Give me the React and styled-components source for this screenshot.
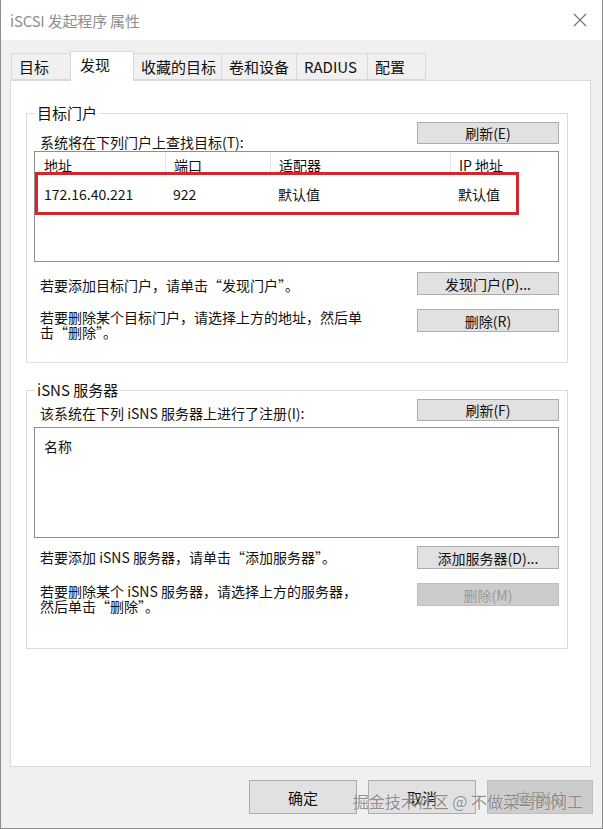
import React from 'react';
import styled, { createGlobalStyle } from 'styled-components';

const GlobalStyle = createGlobalStyle`
  body {
    margin: 0;
    background: #ffffff;
    font-family: "Noto Sans CJK SC", "Noto Sans", sans-serif;
    color: #111;
  }
`;

const Window = styled.div`
  position: relative;
  width: 603px;
  height: 829px;
  box-sizing: border-box;
  background: #f0f0f0;
  border: 1px solid #8c8c8c;
  border-top: none;
  display: flex;
  flex-direction: column;
`;

const TitleBar = styled.div`
  height: 40px;
  flex: none;
  background: #ffffff;
  display: flex;
  align-items: center;
  justify-content: space-between;
  padding: 0 15px 0 9px;
`;

const Title = styled.div`
  font-size: 15px;
  color: #8e8e8e;
  letter-spacing: -0.2px;
`;

const Body = styled.div`
  padding: 11px 9px 0 9px;
  display: flex;
  flex-direction: column;
`;

const TabStrip = styled.div`
  display: flex;
  align-items: flex-end;
  height: 29px;
  padding-left: 1px;
  position: relative;
  z-index: 1;
`;

const Tab = styled.div`
  box-sizing: border-box;
  width: ${p => p.$w}px;
  height: ${p => (p.$active ? 30 : 27)}px;
  margin-bottom: ${p => (p.$active ? -1 : 0)}px;
  padding-left: ${p => (p.$active ? 9 : 7)}px;
  background: ${p => (p.$active ? '#ffffff' : '#f0f0f0')};
  border: 1px solid #d9d9d9;
  border-bottom: ${p => (p.$active ? 'none' : '1px solid #d9d9d9')};
  margin-right: -1px;
  font-size: 15px;
  line-height: ${p => (p.$active ? 26 : 25)}px;
  white-space: nowrap;
`;

const Panel = styled.div`
  box-sizing: border-box;
  height: 687px;
  margin-right: 2px;
  background: #ffffff;
  border: 1px solid #d9d9d9;
  padding: 23px 22px 0 15px;
`;

const Group = styled.fieldset`
  margin: ${p => p.$top || 0}px 0 0 0;
  border: 1px solid #dcdcdc;
  padding: 0 8px ${p => p.$bottom}px 7px;
  min-inline-size: 0;
`;

const Legend = styled.legend`
  margin-left: 1px;
  padding: 0 2px;
  font-size: 15px;
  line-height: 18px;
`;

const Row = styled.div`
  display: flex;
  justify-content: space-between;
  align-items: flex-start;
  margin-top: ${p => p.$gap || 0}px;
  height: ${p => (p.$h ? `${p.$h}px` : 'auto')};
`;

const Label = styled.div`
  margin-left: 6px;
  margin-top: ${p => p.$top || 0}px;
  max-width: 330px;
  font-size: 14px;
  line-height: ${p => p.$lh || 16}px;
`;

const Button = styled.div`
  box-sizing: border-box;
  width: 142px;
  height: ${p => p.$h || 23}px;
  flex: none;
  display: flex;
  align-items: center;
  justify-content: center;
  background: ${p => (p.$disabled ? '#cccccc' : '#e1e1e1')};
  border: 1px solid ${p => (p.$disabled ? '#bfbfbf' : '#adadad')};
  color: ${p => (p.$disabled ? '#9a9a9a' : '#111')};
  font-size: 14px;
`;

const ListBox = styled.div`
  position: relative;
  box-sizing: border-box;
  height: 111px;
  border: 1px solid #8f8f8f;
  background: #ffffff;
  overflow: hidden;
`;

const Columns = styled.div`
  display: grid;
  grid-template-columns: 130px 105px 180px 1fr;
  height: ${p => p.$h}px;
  align-items: center;
  font-size: 14px;
`;

const Cell = styled.div`
  height: 100%;
  display: flex;
  align-items: center;
  padding-left: ${p => (p.$first ? 9 : 8)}px;
  border-left: ${p => (p.$sep ? '1px solid #e5e5e5' : 'none')};
  white-space: nowrap;
`;

const NameHeader = styled.div`
  padding: 8px 0 0 9px;
  font-size: 14px;
  line-height: 20px;
`;

// red marker frame drawn over the first portal row
const Highlight = styled.div`
  position: absolute;
  left: 0;
  top: 20px;
  width: 484px;
  height: 43px;
  box-sizing: border-box;
  border: 3px solid #d9242c;
`;

const Footer = styled.div`
  display: flex;
  justify-content: flex-end;
  gap: 11px;
  margin-top: 13px;
`;

const FooterButton = styled.div`
  box-sizing: border-box;
  width: ${p => p.$w}px;
  height: 34px;
  display: flex;
  align-items: center;
  justify-content: center;
  background: ${p => (p.$disabled ? '#cccccc' : '#e1e1e1')};
  border: 1px solid ${p => (p.$disabled ? '#bfbfbf' : '#adadad')};
  color: ${p => (p.$disabled ? '#9a9a9a' : '#111')};
  font-size: 15px;
`;

const Watermark = styled.div`
  position: absolute;
  right: 19px;
  top: 790px;
  font-size: 16px;
  line-height: 22px;
  color: rgba(70, 70, 70, 0.62);
  text-shadow: 0 0 1px rgba(255, 255, 255, 0.9);
  white-space: nowrap;
  pointer-events: none;
`;

const tabs = [
  { name: '目标', w: 60 },
  { name: '发现', w: 64, active: true },
  { name: '收藏的目标', w: 89 },
  { name: '卷和设备', w: 76 },
  { name: 'RADIUS', w: 72 },
  { name: '配置', w: 59 },
];

function CloseIcon() {
  return (
    <svg width="14" height="14" viewBox="0 0 14 14">
      <path d="M1 1 L13 13 M13 1 L1 13" stroke="#6f6f6f" strokeWidth="1.1" fill="none" />
    </svg>
  );
}

export default function App() {
  return (
    <>
      <GlobalStyle />
      <Window>
        <TitleBar>
          <Title>iSCSI 发起程序 属性</Title>
          <CloseIcon />
        </TitleBar>
        <Body>
          <TabStrip>
            {tabs.map(t => (
              <Tab key={t.name} $w={t.w} $active={t.active}>{t.name}</Tab>
            ))}
          </TabStrip>
          <Panel>
            <Group $bottom={22}>
              <Legend>目标门户</Legend>
              <Row $h={29}>
                <Label $top={12}>系统将在下列门户上查找目标(T):</Label>
                <Button $h={22}>刷新(E)</Button>
              </Row>
              <ListBox>
                <Columns $h={25}>
                  <Cell $first>地址</Cell>
                  <Cell $sep>端口</Cell>
                  <Cell $sep>适配器</Cell>
                  <Cell $sep>IP 地址</Cell>
                </Columns>
                <Columns $h={34}>
                  <Cell $first>172.16.40.221</Cell>
                  <Cell>922</Cell>
                  <Cell>默认值</Cell>
                  <Cell>默认值</Cell>
                </Columns>
                <Highlight />
              </ListBox>
              <Row $gap={10}>
                <Label $top={5}>若要添加目标门户，请单击“发现门户”。</Label>
                <Button>发现门户(P)...</Button>
              </Row>
              <Row $gap={14}>
                <Label $top={1} $lh={15}>若要删除某个目标门户，请选择上方的地址，然后单击“删除”。</Label>
                <Button>删除(R)</Button>
              </Row>
            </Group>

            <Group $top={18} $bottom={34}>
              <Legend>iSNS 服务器</Legend>
              <Row $h={28}>
                <Label $top={6}>该系统在下列 iSNS 服务器上进行了注册(I):</Label>
                <Button $h={22}>刷新(F)</Button>
              </Row>
              <ListBox>
                <NameHeader>名称</NameHeader>
              </ListBox>
              <Row $gap={8}>
                <Label $top={3}>若要添加 iSNS 服务器，请单击“添加服务器”。</Label>
                <Button>添加服务器(D)...</Button>
              </Row>
              <Row $gap={14}>
                <Label $top={1} $lh={15}>若要删除某个 iSNS 服务器，请选择上方的服务器，然后单击“删除”。</Label>
                <Button $disabled>删除(M)</Button>
              </Row>
            </Group>
          </Panel>
          <Footer>
            <FooterButton $w={108}>确定</FooterButton>
            <FooterButton $w={108}>取消</FooterButton>
            <FooterButton $w={106} $disabled>应用(A)</FooterButton>
          </Footer>
        </Body>
        <Watermark>掘金技术社区 @ 不做菜鸟的网工</Watermark>
      </Window>
    </>
  );
}
